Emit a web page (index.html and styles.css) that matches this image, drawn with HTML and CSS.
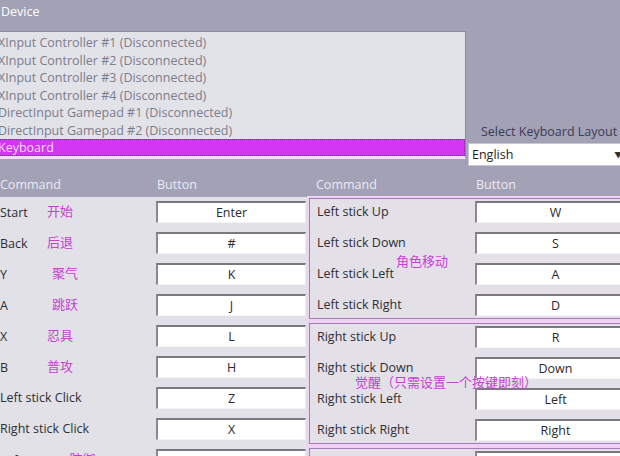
FILE: index.html
```html
<!DOCTYPE html>
<html>
<head>
<meta charset="utf-8">
<link rel="stylesheet" href="styles.css">
</head>
<body>
<div class="app">
  <div class="top">
    <div class="device-label">Device</div>
    <div class="device-row">
      <div class="listbox">
        <div class="item">XInput Controller #1 (Disconnected)</div>
        <div class="item">XInput Controller #2 (Disconnected)</div>
        <div class="item">XInput Controller #3 (Disconnected)</div>
        <div class="item">XInput Controller #4 (Disconnected)</div>
        <div class="item">DirectInput Gamepad #1 (Disconnected)</div>
        <div class="item">DirectInput Gamepad #2 (Disconnected)</div>
        <div class="item sel">Keyboard</div>
      </div>
      <div class="layout">
        <div class="layout-label">Select Keyboard Layout</div>
        <div class="combo"><span>English</span><span class="arrow">&#9660;</span></div>
      </div>
    </div>
  </div>
  <div class="header">
    <div class="h-cmd">Command</div>
    <div class="h-btn">Button</div>
    <div class="h-cmd2">Command</div>
    <div class="h-btn">Button</div>
  </div>
  <div class="grid">
    <div class="col-left">
      <div class="row"><div class="lbl"><span class="en">Start</span><span class="cn">开始</span></div><div class="box">Enter</div></div>
      <div class="row"><div class="lbl"><span class="en">Back</span><span class="cn">后退</span></div><div class="box">#</div></div>
      <div class="row"><div class="lbl"><span class="en">Y</span><span class="cn shift">聚气</span></div><div class="box">K</div></div>
      <div class="row"><div class="lbl"><span class="en">A</span><span class="cn shift">跳跃</span></div><div class="box">J</div></div>
      <div class="row"><div class="lbl"><span class="en">X</span><span class="cn">忍具</span></div><div class="box">L</div></div>
      <div class="row"><div class="lbl"><span class="en">B</span><span class="cn">普攻</span></div><div class="box">H</div></div>
      <div class="row"><div class="lbl">Left stick Click</div><div class="box">Z</div></div>
      <div class="row"><div class="lbl">Right stick Click</div><div class="box">X</div></div>
      <div class="row"><div class="lbl">Left Trigger <span class="cn">防御</span></div><div class="box"></div></div>
    </div>
    <div class="col-right">
      <div class="group">
        <div class="grow"><div class="rlbl">Left stick Up</div><div class="box rbox">W</div></div>
        <div class="grow"><div class="rlbl">Left stick Down</div><div class="box rbox">S</div></div>
        <div class="grow"><div class="rlbl">Left stick Left</div><div class="box rbox">A</div></div>
        <div class="grow"><div class="rlbl">Left stick Right</div><div class="box rbox">D</div></div>
        <div class="note note1">角色移动</div>
      </div>
      <div class="group">
        <div class="grow"><div class="rlbl">Right stick Up</div><div class="box rbox">R</div></div>
        <div class="grow"><div class="rlbl">Right stick Down</div><div class="box rbox">Down</div></div>
        <div class="grow"><div class="rlbl">Right stick Left</div><div class="box rbox">Left</div></div>
        <div class="grow"><div class="rlbl">Right stick Right</div><div class="box rbox">Right</div></div>
        <div class="note note2">觉醒（只需设置一个按键即刻）</div>
      </div>
      <div class="group group3">
        <div class="grow"><div class="rlbl">DPAD Up</div><div class="box rbox"></div></div>
      </div>
    </div>
  </div>
</div>
</body>
</html>
```

FILE: styles.css
```css
html, body {
  margin: 0;
  padding: 0;
}
body {
  width: 620px;
  height: 456px;
  overflow: hidden;
  background: #e1e1e7;
  font-family: "Open Sans", "Noto Sans CJK SC", sans-serif;
  font-size: 12.5px;
  color: #2e2e34;
}
.app {
  width: 620px;
  height: 456px;
  overflow: hidden;
}
.top {
  background: #a2a1b5;
  height: 175px;
}
.device-label {
  color: #ffffff;
  height: 31px;
  line-height: 24px;
  padding-left: 1px;
}
.device-row {
  display: flex;
  align-items: flex-start;
}
.listbox {
  flex: none;
  width: 470px;
  margin-left: -4px;
  height: 128px;
  box-sizing: border-box;
  background: #e2e2e9;
  border-top: 1px solid #8b8a9a;
  border-right: 1px solid #8b8a9a;
  border-bottom: 2px solid #f3dcf5;
  padding-top: 2px;
}
.item {
  height: 17.5px;
  line-height: 17.5px;
  padding-left: 2px;
  color: #7d7d8a;
  white-space: nowrap;
}
.item.sel {
  background: #d236f2;
  color: #f4dcfa;
  outline: 1px dotted #7a2a90;
  outline-offset: -1px;
  height: 17px;
}
.layout {
  flex: none;
  padding-left: 2px;
  padding-top: 92px;
  white-space: nowrap;
}
.layout-label {
  color: #3c3c54;
  padding-left: 13px;
  height: 20px;
  line-height: 18px;
}
.combo {
  width: 160px;
  height: 23px;
  box-sizing: border-box;
  background: #ffffff;
  border: 1px solid #c8c8d4;
  display: flex;
  align-items: center;
  padding-left: 3px;
  color: #1e1e26;
}
.combo .arrow {
  margin-left: 101px;
  font-size: 8px;
  color: #333;
}
.header {
  background: #a2a1b5;
  height: 22px;
  box-sizing: border-box;
  padding-bottom: 4px;
  display: flex;
  align-items: center;
  color: #eceaf4;
  white-space: nowrap;
}
.h-cmd { width: 157px; flex: none; }
.h-btn { width: 159px; flex: none; }
.h-cmd2 { width: 160px; flex: none; }
.grid {
  display: flex;
  align-items: flex-start;
}
.col-left {
  width: 308px;
  flex: none;
}
.row {
  height: 31px;
  box-sizing: border-box;
  padding-top: 4px;
  display: flex;
  align-items: flex-start;
}
.lbl {
  width: 156px;
  flex: none;
  line-height: 22px;
  white-space: nowrap;
}
.en {
  display: inline-block;
  width: 47px;
}
.cn {
  color: #c640d2;
  font-family: "Noto Sans CJK SC", sans-serif;
  font-size: 13px;
  position: relative;
  top: -1px;
}
.cn.shift {
  margin-left: 5px;
}
.box {
  width: 150px;
  height: 22px;
  box-sizing: border-box;
  background: #ffffff;
  border-top: 2px solid #7a7a7e;
  border-left: 2px solid #8a8a8e;
  border-right: 1px solid #e6e6ea;
  border-bottom: 1px solid #f4f4f6;
  text-align: center;
  line-height: 19px;
  color: #2a2a2e;
  flex: none;
}
.col-right {
  flex: none;
  width: 330px;
  padding-top: 1px;
}
.group {
  position: relative;
  height: 121px;
  box-sizing: border-box;
  border: 1px solid #a77bb8;
  box-shadow: 0 0 0 2px #efd2f3;
  background: #e3e0e8;
  margin-bottom: 4px;
  margin-left: 1px;
  display: grid;
  grid-template-rows: 31px 31px 31px 1fr;
}
.group3 {
  height: 40px;
  display: block;
  margin-top: 2px;
}
.grow {
  display: flex;
  align-items: flex-start;
  padding-top: 2px;
}
.rlbl {
  width: 158px;
  padding-left: 7px;
  flex: none;
  line-height: 22px;
  white-space: nowrap;
}
.rbox {
  width: 160px;
}
.note {
  position: absolute;
  color: #c640d2;
  font-family: "Noto Sans CJK SC", sans-serif;
  font-size: 13px;
  white-space: nowrap;
  line-height: 16px;
}
.note1 {
  left: 86px;
  top: 54px;
}
.note2 {
  left: 45px;
  top: 50px;
}
```
